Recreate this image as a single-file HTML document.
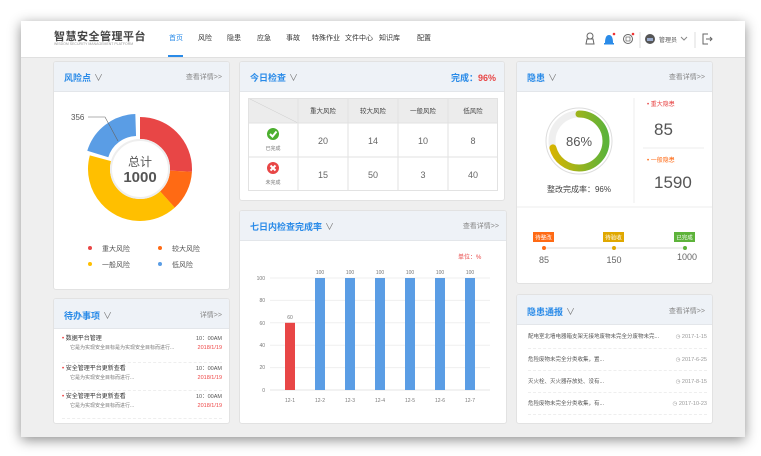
<!DOCTYPE html>
<html><head><meta charset="utf-8"><style>
*{margin:0;padding:0;box-sizing:border-box}
body{width:761px;height:456px;background:#fff;font-family:"Liberation Sans","Noto Sans CJK SC",sans-serif;position:relative;overflow:hidden;color:#333}
.win{position:absolute;left:21px;top:21px;width:724px;height:416px;background:#efefef;box-shadow:0 3px 12px rgba(0,0,0,.45)}
.hdr{position:absolute;left:0;top:0;width:724px;height:37px;background:#fff;border-bottom:1px solid #e0e0e0}
.p{position:absolute;background:#fff;border:1px solid #e2e2e2;border-radius:3px;overflow:hidden}
.ph{height:30px;background:#eef2f7;border-bottom:1px solid #e3e6ea;position:relative}
.pt{position:absolute;left:10px;top:9px;font-size:9px;font-weight:bold;color:#2a8be8}
.pt i{font-style:normal;color:#777;font-weight:normal;margin-left:3px}
.more{position:absolute;right:7px;top:10px;font-size:7px;color:#888}
.abs{position:absolute}
.nav span{position:absolute;top:12px;font-size:7px;color:#333}
</style></head><body>
<div class="win">
<div class="hdr">
 <div class="abs" style="left:33px;top:7px;font-size:11px;font-weight:bold;color:#444;letter-spacing:0.5px">智慧安全管理平台</div>
 <div class="abs" style="left:33px;top:21px;font-size:3.5px;color:#999">WISDOM SECURITY MANAGEMENT PLATFORM</div>
 <div class="nav">
  <span style="left:148px;color:#2a8be8">首页</span>
  <span style="left:177px">风险</span><span style="left:206px">隐患</span><span style="left:236px">应急</span><span style="left:265px">事故</span><span style="left:291px">特殊作业</span><span style="left:324px">文件中心</span><span style="left:358px">知识库</span><span style="left:396px">配置</span>
 </div>
 <div class="abs" style="left:147px;top:34px;width:15px;height:2px;background:#2a8be8"></div>
 <svg class="abs" style="left:562px;top:9px" width="150" height="20">
  <circle cx="7" cy="6" r="3" fill="none" stroke="#666" stroke-width="1"/><path d="M3 14 L4 9 L10 9 L11 14 Z" fill="none" stroke="#666"/>
  <path d="M22 13 Q22 5 26 5 Q30 5 30 13 Z" fill="#2a8be8"/><rect x="21" y="13" width="10" height="1.5" fill="#2a8be8"/><circle cx="31" cy="4" r="1.3" fill="#e33"/>
  <circle cx="45" cy="9" r="4.5" fill="none" stroke="#666"/><rect x="43" y="7" width="4" height="4" fill="none" stroke="#666" stroke-width=".7"/><circle cx="50" cy="4" r="1.3" fill="#e33"/>
  <line x1="57" y1="2" x2="57" y2="18" stroke="#ddd"/>
  <circle cx="67" cy="9" r="5" fill="#555"/><rect x="64" y="8" width="6" height="3" fill="#9ac"/>
  <text x="76" y="12" font-size="6" fill="#555">管理员</text>
  <path d="M98 7 L101 10 L104 7" fill="none" stroke="#888"/>
  <line x1="112" y1="2" x2="112" y2="18" stroke="#ddd"/>
  <path d="M125 4 L120 4 L120 14 L125 14 M123 9 L129 9 M127 7 L129 9 L127 11" fill="none" stroke="#666"/>
 </svg>
</div>

<!-- 风险点 -->
<div class="p" style="left:32px;top:40px;width:177px;height:229px">
 <div class="ph"><div class="pt">风险点<i>∨</i></div><div class="more">查看详情>></div></div>
 <svg class="abs" style="left:0;top:30px" width="177" height="198">
  <g transform="translate(86,77)">
   <circle r="41" fill="none" stroke="#e84646" stroke-width="22" stroke-dasharray="66.5 300" transform="rotate(-90)"/>
   <circle r="41" fill="none" stroke="#ff6a14" stroke-width="22" stroke-dasharray="32.2 300" transform="rotate(3)"/>
   <circle r="41" fill="none" stroke="#ffbf00" stroke-width="22" stroke-dasharray="105.2 300" transform="rotate(48)"/>
   <circle r="41" fill="none" stroke="#5a9de5" stroke-width="22" stroke-dasharray="50.8 300" transform="translate(-3,-3) rotate(197)"/>
   <circle r="29" fill="#fff" stroke="#eee" stroke-width="2"/>
   <text x="0" y="-3" text-anchor="middle" font-size="12" fill="#555">总计</text>
   <text x="0" y="13" text-anchor="middle" font-size="15" font-weight="bold" fill="#555">1000</text>
   <path d="M-52 -52 L-35 -52 L-22 -28" fill="none" stroke="#666" stroke-width=".6"/>
   <text x="-69" y="-49" font-size="8" fill="#555">356</text>
  </g>
  <circle cx="36" cy="156" r="2" fill="#e84646"/><text x="48" y="159" font-size="7" fill="#555">重大风险</text>
  <circle cx="106" cy="156" r="2" fill="#ff6a14"/><text x="118" y="159" font-size="7" fill="#555">较大风险</text>
  <circle cx="36" cy="172" r="2" fill="#ffbf00"/><text x="48" y="175" font-size="7" fill="#555">一般风险</text>
  <circle cx="106" cy="172" r="2" fill="#5a9de5"/><text x="118" y="175" font-size="7" fill="#555">低风险</text>
 </svg>
</div>

<!-- 待办事项 -->
<div class="p" style="left:32px;top:277px;width:177px;height:126px">
 <div class="ph"><div class="pt" style="top:10px">待办事项<i>∨</i></div><div class="more" style="top:11px">详情>></div></div>
 <div class="abs" style="left:8px;top:36px;font-size:6px;line-height:9px;width:160px">
  <div style="height:28px;border-bottom:1px dashed #eee;position:relative"><span style="color:#e33">•</span> 数据平台管理<div style="color:#777;font-size:5px;padding-left:8px">它是为实现安全目标是为实现安全目标而进行...</div><div style="position:absolute;right:0;top:0;text-align:right;color:#555;font-size:5.5px">10：00AM<br><span style="color:#e44">2018/1/19</span></div></div>
  <div style="height:28px;border-bottom:1px dashed #eee;position:relative;padding-top:2px"><span style="color:#e33">•</span> 安全管理平台更新查看<div style="color:#777;font-size:5px;padding-left:8px">它是为实现安全目标而进行...</div><div style="position:absolute;right:0;top:2px;text-align:right;color:#555;font-size:5.5px">10：00AM<br><span style="color:#e44">2018/1/19</span></div></div>
  <div style="height:28px;border-bottom:1px dashed #eee;position:relative;padding-top:2px"><span style="color:#e33">•</span> 安全管理平台更新查看<div style="color:#777;font-size:5px;padding-left:8px">它是为实现安全目标而进行...</div><div style="position:absolute;right:0;top:2px;text-align:right;color:#555;font-size:5.5px">10：00AM<br><span style="color:#e44">2018/1/19</span></div></div>
 </div>
</div>

<!-- 今日检查 -->
<div class="p" style="left:218px;top:40px;width:266px;height:140px">
 <div class="ph"><div class="pt">今日检查<i>∨</i></div><div class="abs" style="right:8px;top:9px;font-size:9px;font-weight:bold;color:#2a8be8">完成：<span style="color:#e84646">96%</span></div></div>
 <svg class="abs" style="left:8px;top:36px" width="250" height="93">
  <rect x="0" y="0" width="250" height="25" fill="#ececec"/>
  <line x1="0" y1="0" x2="50" y2="25" stroke="#ccc" stroke-width=".5"/>
  <g stroke="#e2e2e2" stroke-width="1" fill="none"><rect x=".5" y=".5" width="249" height="92"/><line x1="50" y1="0" x2="50" y2="93"/><line x1="100" y1="0" x2="100" y2="93"/><line x1="150" y1="0" x2="150" y2="93"/><line x1="200" y1="0" x2="200" y2="93"/><line x1="0" y1="25" x2="250" y2="25"/><line x1="0" y1="59" x2="250" y2="59"/></g>
  <g font-size="6.5" fill="#444" text-anchor="middle"><text x="75" y="15">重大风险</text><text x="125" y="15">较大风险</text><text x="175" y="15">一般风险</text><text x="225" y="15">低风险</text></g>
  <g font-size="9" fill="#666" text-anchor="middle"><text x="75" y="46">20</text><text x="125" y="46">14</text><text x="175" y="46">10</text><text x="225" y="46">8</text><text x="75" y="80">15</text><text x="125" y="80">50</text><text x="175" y="80">3</text><text x="225" y="80">40</text></g>
  <circle cx="25" cy="36" r="6" fill="#4caf2f"/><path d="M22 36 L24.5 38.5 L28.5 33.5" fill="none" stroke="#fff" stroke-width="2"/>
  <text x="25" y="52" font-size="5" fill="#777" text-anchor="middle">已完成</text>
  <circle cx="25" cy="70" r="6" fill="#e84646"/><path d="M22.5 67.5 L27.5 72.5 M27.5 67.5 L22.5 72.5" stroke="#fff" stroke-width="2"/>
  <text x="25" y="86" font-size="5" fill="#777" text-anchor="middle">未完成</text>
 </svg>
</div>

<!-- 七日 -->
<div class="p" style="left:218px;top:189px;width:268px;height:214px">
 <div class="ph"><div class="pt">七日内检查完成率<i>∨</i></div><div class="more">查看详情>></div></div>
 <svg class="abs" style="left:0;top:0" width="268" height="214">
  <text x="218" y="48" font-size="6" fill="#e84646">单位：%</text>
  <g stroke="#efefef" stroke-width="1"><line x1="30" y1="67" x2="250" y2="67"/><line x1="30" y1="89.4" x2="250" y2="89.4"/><line x1="30" y1="111.8" x2="250" y2="111.8"/><line x1="30" y1="134.2" x2="250" y2="134.2"/><line x1="30" y1="156.6" x2="250" y2="156.6"/><line x1="30" y1="179" x2="250" y2="179" stroke="#e4e4e4"/></g>
  <g font-size="5" fill="#777" text-anchor="end"><text x="25" y="69">100</text><text x="25" y="91">80</text><text x="25" y="114">60</text><text x="25" y="136">40</text><text x="25" y="158">20</text><text x="25" y="181">0</text></g>
  <rect x="45" y="111.8" width="10" height="67.2" fill="#e84646"/>
  <g fill="#5a9de5"><rect x="75" y="67" width="10" height="112"/><rect x="105" y="67" width="10" height="112"/><rect x="135" y="67" width="10" height="112"/><rect x="165" y="67" width="10" height="112"/><rect x="195" y="67" width="10" height="112"/><rect x="225" y="67" width="10" height="112"/></g>
  <g font-size="5" fill="#777" text-anchor="middle"><text x="50" y="108">60</text><text x="80" y="63">100</text><text x="110" y="63">100</text><text x="140" y="63">100</text><text x="170" y="63">100</text><text x="200" y="63">100</text><text x="230" y="63">100</text>
  <text x="50" y="191">12-1</text><text x="80" y="191">12-2</text><text x="110" y="191">12-3</text><text x="140" y="191">12-4</text><text x="170" y="191">12-5</text><text x="200" y="191">12-6</text><text x="230" y="191">12-7</text></g>
 </svg>
</div>

<!-- 隐患 -->
<div class="p" style="left:495px;top:40px;width:197px;height:223px">
 <div class="ph"><div class="pt">隐患<i>∨</i></div><div class="more">查看详情>></div></div>
 <svg class="abs" style="left:0;top:0" width="197" height="223">
  <defs><linearGradient id="g" x1="0" y1="0" x2="0" y2="1"><stop offset="0" stop-color="#d6b400"/><stop offset="1" stop-color="#5db33a"/></linearGradient></defs>
  <circle cx="62" cy="79" r="33" fill="#fff" stroke="#ddd" stroke-width="1"/>
  <circle cx="62" cy="79" r="27" fill="none" stroke="#efefef" stroke-width="7"/>
  <circle cx="62" cy="79" r="27" fill="none" stroke="url(#g)" stroke-width="7" stroke-linecap="round" stroke-dasharray="120 200" transform="rotate(-90 62 79)"/>
  <text x="62" y="84" text-anchor="middle" font-size="13" fill="#555">86%</text>
  <text x="62" y="130" text-anchor="middle" font-size="8" fill="#444">整改完成率：96%</text>
  <line x1="117" y1="36" x2="117" y2="141" stroke="#eee"/>
  <line x1="126" y1="86" x2="187" y2="86" stroke="#eee"/>
  <text x="130" y="44" font-size="6" fill="#e84646">•  重大隐患</text>
  <text x="137" y="73" font-size="17" fill="#555">85</text>
  <text x="130" y="100" font-size="6" fill="#ff6a14">•  一般隐患</text>
  <text x="137" y="126" font-size="17" fill="#555">1590</text>
  <line x1="0" y1="145" x2="197" y2="145" stroke="#eee"/>
  <line x1="27" y1="186" x2="170" y2="186" stroke="#ddd"/>
  <rect x="16" y="170" width="21" height="10" fill="#ff6a14"/><text x="26.5" y="177.5" text-anchor="middle" font-size="5.5" fill="#fff">待整改</text><circle cx="27" cy="186" r="2" fill="#ff6a14"/>
  <rect x="86" y="170" width="21" height="10" fill="#e0a800"/><text x="96.5" y="177.5" text-anchor="middle" font-size="5.5" fill="#fff">待验收</text><circle cx="97" cy="186" r="2" fill="#e0a800"/>
  <rect x="157" y="170" width="21" height="10" fill="#5db33a"/><text x="167.5" y="177.5" text-anchor="middle" font-size="5.5" fill="#fff">已完成</text><circle cx="168" cy="186" r="2" fill="#5db33a"/>
  <text x="27" y="201" text-anchor="middle" font-size="9" fill="#666">85</text>
  <text x="97" y="201" text-anchor="middle" font-size="9" fill="#666">150</text>
  <text x="170" y="198" text-anchor="middle" font-size="9" fill="#666">1000</text>
 </svg>
</div>

<!-- 隐患通报 -->
<div class="p" style="left:495px;top:273px;width:197px;height:130px">
 <div class="ph"><div class="pt" style="top:10px">隐患通报<i>∨</i></div><div class="more" style="top:11px">查看详情>></div></div>
 <div class="abs" style="left:11px;top:32px;width:179px;font-size:5.5px;color:#555">
  <div style="height:22px;line-height:20px;border-bottom:1px dashed #eee;position:relative">配电室北墙电器箱支架无接地废物未完全分废物未完...<span style="position:absolute;right:0;color:#999">◷ 2017-1-15</span></div>
  <div style="height:22px;line-height:22px;border-bottom:1px dashed #eee;position:relative">危险废物未完全分类收集，置...<span style="position:absolute;right:0;color:#999">◷ 2017-6-25</span></div>
  <div style="height:22px;line-height:22px;border-bottom:1px dashed #eee;position:relative">灭火栓、灭火器存放处、没有...<span style="position:absolute;right:0;color:#999">◷ 2017-8-15</span></div>
  <div style="height:22px;line-height:22px;border-bottom:1px dashed #eee;position:relative">危险废物未完全分类收集，有...<span style="position:absolute;right:0;color:#999">◷ 2017-10-23</span></div>
 </div>
</div>
</div>
</body></html>
